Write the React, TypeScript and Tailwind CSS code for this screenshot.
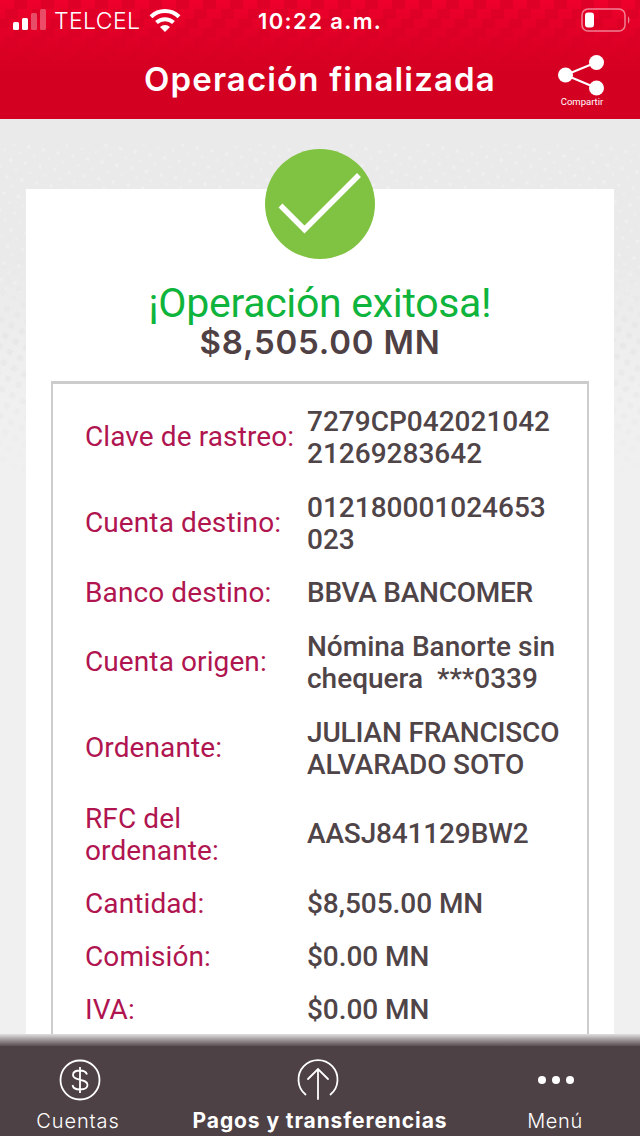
import type { ReactNode } from 'react';

type Row = { label: string[]; value: string[]; tracking: string };

const rows: Row[] = [
  { label: ['Clave de rastreo:'], value: ['7279CP042021042', '21269283642'], tracking: 'tracking-[0px]' },
  { label: ['Cuenta destino:'], value: ['012180001024653', '023'], tracking: 'tracking-[0px]' },
  { label: ['Banco destino:'], value: ['BBVA BANCOMER'], tracking: 'tracking-[-0.25px]' },
  { label: ['Cuenta origen:'], value: ['Nómina Banorte sin', 'chequera  ***0339'], tracking: 'tracking-[0px]' },
  { label: ['Ordenante:'], value: ['JULIAN FRANCISCO', 'ALVARADO SOTO'], tracking: 'tracking-[-0.15px]' },
  { label: ['RFC del', 'ordenante:'], value: ['AASJ841129BW2'], tracking: 'tracking-[-0.15px]' },
  { label: ['Cantidad:'], value: ['$8,505.00 MN'], tracking: 'tracking-[-0.05px]' },
  { label: ['Comisión:'], value: ['$0.00 MN'], tracking: 'tracking-[-0.05px]' },
  { label: ['IVA:'], value: ['$0.00 MN'], tracking: 'tracking-[-0.05px]' },
];

function Lines({ items }: { items: string[] }) {
  return (
    <div className={items.length > 1 ? 'pt-0.5' : ''}>
      {items.map((item) => (
        <div key={item} className="whitespace-pre">{item}</div>
      ))}
    </div>
  );
}

function HeaderPattern() {
  return (
    <svg className="absolute inset-0" width="640" height="119" aria-hidden="true">
      <defs>
        <pattern id="steps" width="27" height="28" patternUnits="userSpaceOnUse">
          <path d="M14 0h13v9H14zM5 9h13v10H5zM0 19h9v9H0zM23 19h4v9h-4z" fill="#b8001f" />
        </pattern>
        <linearGradient id="fade" x1="0" y1="0" x2="0" y2="1">
          <stop offset="0" stopColor="#fff" stopOpacity="0.28" />
          <stop offset="0.55" stopColor="#fff" stopOpacity="0" />
        </linearGradient>
        <mask id="stepsMask">
          <rect width="640" height="119" fill="url(#fade)" />
        </mask>
      </defs>
      <rect width="640" height="119" fill="url(#steps)" mask="url(#stepsMask)" />
    </svg>
  );
}

function DottedBackground() {
  return (
    <svg className="absolute inset-0" width="640" height="927" aria-hidden="true">
      <defs>
        <pattern id="lightDots" width="15" height="17" patternUnits="userSpaceOnUse" patternTransform="rotate(12)">
          <circle cx="4" cy="4" r="1.8" fill="#f0f0f0" />
          <circle cx="11" cy="12" r="1.5" fill="#eeeeee" />
        </pattern>
        <pattern id="darkDots" width="12" height="12" patternUnits="userSpaceOnUse" patternTransform="rotate(30)">
          <rect x="2" y="2" width="6" height="6" rx="2" fill="#e6e6e6" />
        </pattern>
        <linearGradient id="base" x1="0" y1="0" x2="0" y2="1">
          <stop offset="0.15" stopColor="#f0f0f0" stopOpacity="0" />
          <stop offset="0.3" stopColor="#f0f0f0" />
        </linearGradient>
        <linearGradient id="darkFade" x1="0" y1="0" x2="0" y2="1">
          <stop offset="0" stopColor="#fff" stopOpacity="0" />
          <stop offset="0.35" stopColor="#fff" stopOpacity="0.8" />
          <stop offset="1" stopColor="#fff" stopOpacity="0" />
        </linearGradient>
        <mask id="darkMask">
          <rect y="140" width="640" height="220" fill="url(#darkFade)" />
        </mask>
      </defs>
      <rect y="25" width="640" height="160" fill="url(#lightDots)" />
      <rect width="640" height="927" fill="url(#base)" />
      <rect y="140" width="640" height="220" fill="url(#darkDots)" mask="url(#darkMask)" />
    </svg>
  );
}

function StatusBar() {
  return (
    <div className="relative flex h-10 items-center">
      <svg width="36" height="24" className="ml-3" fill="#fff">
        <rect x="1" y="14" width="6" height="8" rx="1.5" />
        <rect x="10" y="10" width="6" height="12" rx="1.5" />
        <rect x="19" y="5" width="6" height="17" rx="1.5" opacity=".3" />
        <rect x="28" y="1" width="6" height="21" rx="1.5" opacity=".3" />
      </svg>
      <span className="ml-1.5 w-[95px] pt-0.5 font-['Inter',sans-serif] text-[23px] font-light tracking-[0.4px]">TELCEL</span>
      <svg width="32" height="24" viewBox="0 0 32 24" fill="none" stroke="#fff" strokeWidth="4">
        <path d="M2 8.8a20 20 0 0 1 28 0M7.5 14.5a12.5 12.5 0 0 1 17 0" />
        <path d="M11 19a7.5 7.5 0 0 1 10 0l-5 5z" fill="#fff" stroke="none" />
      </svg>
      <span className="ml-[77px] pt-0.5 font-['Inter',sans-serif] text-[22px] font-semibold tracking-[1.4px]">10:22 a.m.</span>
      <svg width="50" height="24" className="mr-[9px] ml-auto">
        <rect x="1" y="1" width="43" height="22" rx="6" fill="none" stroke="#fff" strokeWidth="1.5" opacity=".5" />
        <rect x="4" y="4.5" width="9" height="15" rx="3" fill="#fff" />
        <path d="M47 8q3 4 0 8z" fill="#fff" opacity=".5" />
      </svg>
    </div>
  );
}

function Tab({ label, children }: { label: ReactNode; children: ReactNode }) {
  return (
    <div className="flex flex-col items-center">
      <div className="mb-[5px] flex h-[44px] items-center">{children}</div>
      {label}
    </div>
  );
}

export default function App() {
  return (
    <div className="flex h-[1136px] w-[640px] flex-col overflow-hidden bg-[#eaeaea] font-['Roboto',sans-serif]">
      <header className="relative h-[119px] shrink-0 bg-linear-to-b from-[#ee002b] to-[#d40022] to-60% text-white">
        <HeaderPattern />
        <StatusBar />
        <div className="relative flex">
          <h1 className="mt-[19px] ml-[144px] w-[413px] font-['Inter',sans-serif] text-[33px] leading-10 font-semibold tracking-[1.15px] whitespace-nowrap">
            Operación finalizada
          </h1>
          <div className="mt-[14px] flex w-[50px] flex-col items-center">
            <svg width="50" height="42" fill="#fff">
              <path d="M8.5 21 39 8.5M8.5 21l31 13" stroke="#fff" strokeWidth="2" />
              <circle cx="8.5" cy="21" r="7.5" />
              <circle cx="39.5" cy="8.5" r="7.5" />
              <circle cx="39.5" cy="34" r="7.5" />
            </svg>
            <span className="text-[9.5px] leading-3 font-normal">Compartir</span>
          </div>
        </div>
      </header>

      <main className="relative flex min-h-0 flex-1 flex-col px-[26px] pt-[70px]">
        <DottedBackground />
        <section className="relative flex min-h-0 flex-1 flex-col bg-white px-[25px]">
          <svg width="110" height="110" className="-mt-10 shrink-0 self-center">
            <circle cx="55" cy="55" r="55" fill="#80c342" />
            <path d="M15.5 56.5 39.5 80.5 94 26" fill="none" stroke="#fff" strokeWidth="5.5" />
          </svg>
          <h2 className="mt-[24px] text-center text-[41px] leading-[41px] tracking-[-0.3px] whitespace-nowrap text-[#0fb43c]">¡Operación exitosa!</h2>
          <p className="text-center font-['Inter',sans-serif] text-[33px] leading-[37px] font-semibold tracking-[0.8px] text-[#4f4044]">$8,505.00 MN</p>
          <div className="mt-5 min-h-0 flex-1 border-2 border-t-[3px] border-b-0 border-[#ccc] pt-[10px] pl-8">
            {rows.map((row) => (
              <div
                key={row.label[0]}
                className={`flex items-center text-[28px] leading-8 ${row.label.length + row.value.length > 2 ? 'h-[86px]' : 'h-[53px]'}`}
              >
                <div className="w-[222px] tracking-[0.1px] text-[#b01550]">
                  <Lines items={row.label} />
                </div>
                <div className={`font-medium text-[#4f4447] ${row.tracking}`}>
                  <Lines items={row.value} />
                </div>
              </div>
            ))}
          </div>
        </section>
        <div className="absolute inset-x-0 bottom-0 h-3 bg-linear-to-b from-[#e2e0e0] to-[#5c5054]" />
      </main>

      <nav className="grid h-[90px] shrink-0 grid-cols-[156px_328px_142px] bg-[#4e4145] pt-[12px] font-['Inter',sans-serif] text-white">
        <Tab label={<span className="text-[20px] leading-7 font-light tracking-[0.9px]">Cuentas</span>}>
          <svg width="44" height="44" className="ml-1" fill="none" stroke="#fff" strokeWidth="1.8">
            <circle cx="22" cy="22" r="19.5" />
            <path d="M29 16.5c-1-3-4-4-7-4-4 0-7 1.5-7 4.5 0 6.5 14.5 3 14.5 10 0 3.500-4 4.500-7.500 4.500-4 0-7-1.500-7.500-4.500M22 9v26" />
          </svg>
        </Tab>
        <Tab label={<span className="text-[21px] leading-7 font-bold tracking-[0.9px] whitespace-nowrap">Pagos y transferencias</span>}>
          <svg width="44" height="44" className="mr-1" fill="none" stroke="#fff" strokeWidth="1.8" strokeLinecap="round">
            <path d="M9.5 36.5a19.5 19.5 0 1 1 25 0M22 41V11M12 21l10-10 10 10" />
          </svg>
        </Tab>
        <Tab label={<span className="text-[20px] leading-7 font-light tracking-[0.6px]">Menú</span>}>
          <svg width="38" height="10" className="ml-0.5" fill="#fff">
            <circle cx="5" cy="5" r="4" />
            <circle cx="19" cy="5" r="4" />
            <circle cx="33" cy="5" r="4" />
          </svg>
        </Tab>
      </nav>
    </div>
  );
}
